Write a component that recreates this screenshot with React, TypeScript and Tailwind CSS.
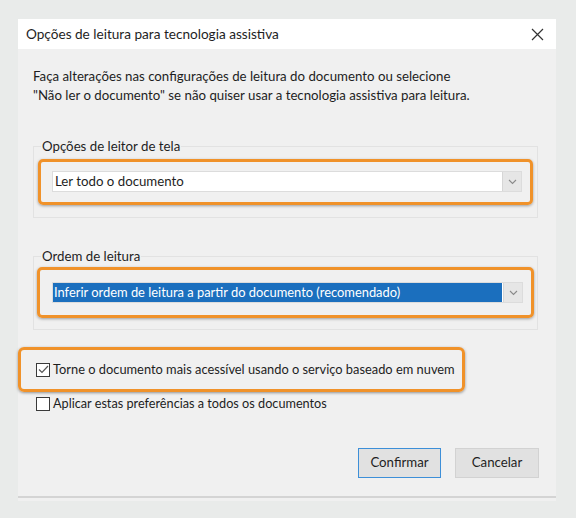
import React from "react";

const font = { fontFamily: "Lato, 'Noto Sans', sans-serif" };

function Chevron() {
  return (
    <div className="w-[19px] self-stretch flex items-center justify-center bg-[#e6e6e6] border-l border-[#d6d6d6]">
      <svg width="9" height="6" viewBox="0 0 9 6" fill="none">
        <path d="M1 1l3.5 3.5L8 1" stroke="#8a8a8a" strokeWidth="1.1" />
      </svg>
    </div>
  );
}

function Checkbox({ checked }: { checked?: boolean }) {
  return (
    <div className="w-[14px] h-[14px] border border-[#3a3a3a] bg-white flex items-center justify-center shrink-0">
      {checked && (
        <svg width="11" height="9" viewBox="0 0 11 9" fill="none">
          <path d="M1 4.5l3 3L10 1" stroke="#555" strokeWidth="1.2" />
        </svg>
      )}
    </div>
  );
}

export default function App() {
  return (
    <div className="w-[576px] h-[518px] bg-[#e9ebea] pt-[19px] pl-[18px] text-[#1e1e1e]" style={font}>
      <div className="w-[538px]">
        <div className="h-[30px] bg-white flex items-center justify-between pl-[8px] pr-[12px]">
          <span className="text-[13.6px]">Opções de leitura para tecnologia assistiva</span>
          <svg width="13" height="13" viewBox="0 0 13 13" fill="none">
            <path d="M1 1l11 11M12 1L1 12" stroke="#333" strokeWidth="1.2" />
          </svg>
        </div>
        <div className="bg-[#f0f0f0] pt-[18px] pb-[3px] text-[13.25px]">
          <p className="pl-[15px] leading-[19px] whitespace-nowrap">
            Faça alterações nas configurações de leitura do documento ou selecione
            <br />
            "Não ler o documento" se não quiser usar a tecnologia assistiva para leitura.
          </p>

          <fieldset className="mt-[32px] ml-[15px] mr-[18px] border border-[#e2e2e2] px-[4px] pb-[12px]">
            <legend className="ml-[3px] px-[1px] leading-[19px]">Opções de leitor de tela</legend>
            <div className="mt-[3px] border-[3px] border-[#f0922a] rounded-[5px] shadow-[0_1px_3px_rgba(0,0,0,0.35)] pl-[11px] pr-[8px] pt-[9px] pb-[10px]">
              <div className="h-[21px] bg-white border border-[#dcdcdc] flex items-center">
                <span className="flex-1 pl-[2px]">Ler todo o documento</span>
                <Chevron />
              </div>
            </div>
          </fieldset>

          <fieldset className="mt-[29px] ml-[15px] mr-[18px] border border-[#e2e2e2] px-[3px] pb-[11px]">
            <legend className="ml-[4px] px-[1px] leading-[19px]">Ordem de leitura</legend>
            <div className="mt-[1px] border-[3px] border-[#f0922a] rounded-[5px] shadow-[0_1px_3px_rgba(0,0,0,0.35)] pl-[12px] pr-[8px] pt-[12px] pb-[12px]">
              <div className="h-[21px] bg-white border border-[#dcdcdc] flex items-center">
                <div className="flex-1 self-stretch bg-[#1b6fbe] text-white text-[12.9px] flex items-center pl-[1px] mr-[1px]">
                  Inferir ordem de leitura a partir do documento (recomendado)
                </div>
                <Chevron />
              </div>
            </div>
          </fieldset>

          <div className="mt-[17px] w-[447px] h-[45px] border-[3px] border-[#f0922a] rounded-[6px] shadow-[0_1px_3px_rgba(0,0,0,0.4)] flex items-center pl-[15px] gap-[3px]">
            <Checkbox checked />
            <span className="whitespace-nowrap text-[12.85px]">Torne o documento mais acessível usando o serviço baseado em nuvem</span>
          </div>

          <div className="mt-0 flex items-center pl-[18px] gap-[3px] h-[24px]">
            <Checkbox />
            <span className="whitespace-nowrap text-[12.7px]">Aplicar estas preferências a todos os documentos</span>
          </div>

          <div className="mt-[32px] flex justify-end gap-[14px] pr-[17px]">
            <button className="w-[83px] h-[30px] bg-[#e1e1e1] border border-[#3d8fd8] text-[#1e1e1e]">Confirmar</button>
            <button className="w-[84px] h-[30px] bg-[#e1e1e1] border border-[#d2d2d2] text-[#1e1e1e]">Cancelar</button>
          </div>

          <div className="mt-[18px] h-[2px] bg-[#d4d4d4]" />
        </div>
      </div>
    </div>
  );
}
